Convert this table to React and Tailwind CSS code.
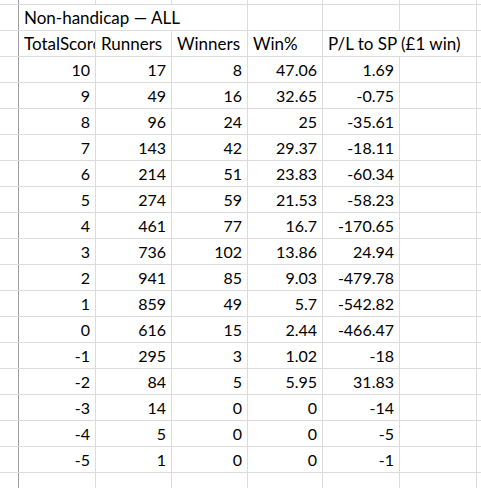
import React from 'react';

const rows = [
  ['10', '17', '8', '47.06', '1.69'],
  ['9', '49', '16', '32.65', '-0.75'],
  ['8', '96', '24', '25', '-35.61'],
  ['7', '143', '42', '29.37', '-18.11'],
  ['6', '214', '51', '23.83', '-60.34'],
  ['5', '274', '59', '21.53', '-58.23'],
  ['4', '461', '77', '16.7', '-170.65'],
  ['3', '736', '102', '13.86', '24.94'],
  ['2', '941', '85', '9.03', '-479.78'],
  ['1', '859', '49', '5.7', '-542.82'],
  ['0', '616', '15', '2.44', '-466.47'],
  ['-1', '295', '3', '1.02', '-18'],
  ['-2', '84', '5', '5.95', '31.83'],
  ['-3', '14', '0', '0', '-14'],
  ['-4', '5', '0', '0', '-5'],
  ['-5', '1', '0', '0', '-1'],
];

// column widths incl. right gridline
const widths = ['w-[77px]', 'w-[76px]', 'w-[76px]', 'w-[75px]', 'w-[77px]', 'w-[77px]'];

const Cell = ({ w, right, children }) => (
  <div
    className={`${w} shrink-0 h-full border-r border-[#dadcdd] overflow-hidden whitespace-nowrap leading-[25px] px-[5px] ${
      right ? 'text-right' : 'text-left'
    }`}
  >
    {children}
  </div>
);

const Row = ({ h = 'h-[26px]', text = 'text-[16px]', children }) => (
  <div className={`flex ${h} ${text} border-b border-[#dadcdd]`}>
    <div className="w-[19px] shrink-0 h-full border-r border-[#9e9e9e]" />
    {children}
    <div className="flex-1 h-full" />
  </div>
);

const EmptyCells = () => widths.map((w, i) => <Cell key={i} w={w} />);

export default function App() {
  return (
    <div
      className="w-[481px] h-[488px] overflow-hidden bg-white text-black"
      style={{ fontFamily: 'Lato, "Open Sans", sans-serif' }}
    >
      <Row h="h-[5px]">
        <EmptyCells />
      </Row>

      <Row text="text-[17px]">
        <div className="w-[229px] shrink-0 h-full border-r border-[#dadcdd] whitespace-nowrap leading-[26px] px-[5px]">
          Non-handicap — ALL
        </div>
        <Cell w={widths[3]} />
        <Cell w={widths[4]} />
        <Cell w={widths[5]} />
      </Row>

      <Row text="text-[17px]">
        {/* TotalScore runs into the next filled cell, so it is cut like in the sheet */}
        {['TotalScore', 'Runners', 'Winners', 'Win%'].map((t, i) => (
          <Cell key={t} w={widths[i]}>{t}</Cell>
        ))}
        <div className="w-[154px] shrink-0 h-full border-r border-[#dadcdd] whitespace-nowrap leading-[26px] px-[5px]">
          P/L to SP (£1 win)
        </div>
      </Row>

      {rows.map((r, idx) => (
        <Row key={idx}>
          {r.map((v, i) => (
            <Cell key={i} w={widths[i]} right>{v}</Cell>
          ))}
          <Cell w={widths[5]} />
        </Row>
      ))}

      <Row h="h-[30px]">
        <EmptyCells />
      </Row>
    </div>
  );
}
